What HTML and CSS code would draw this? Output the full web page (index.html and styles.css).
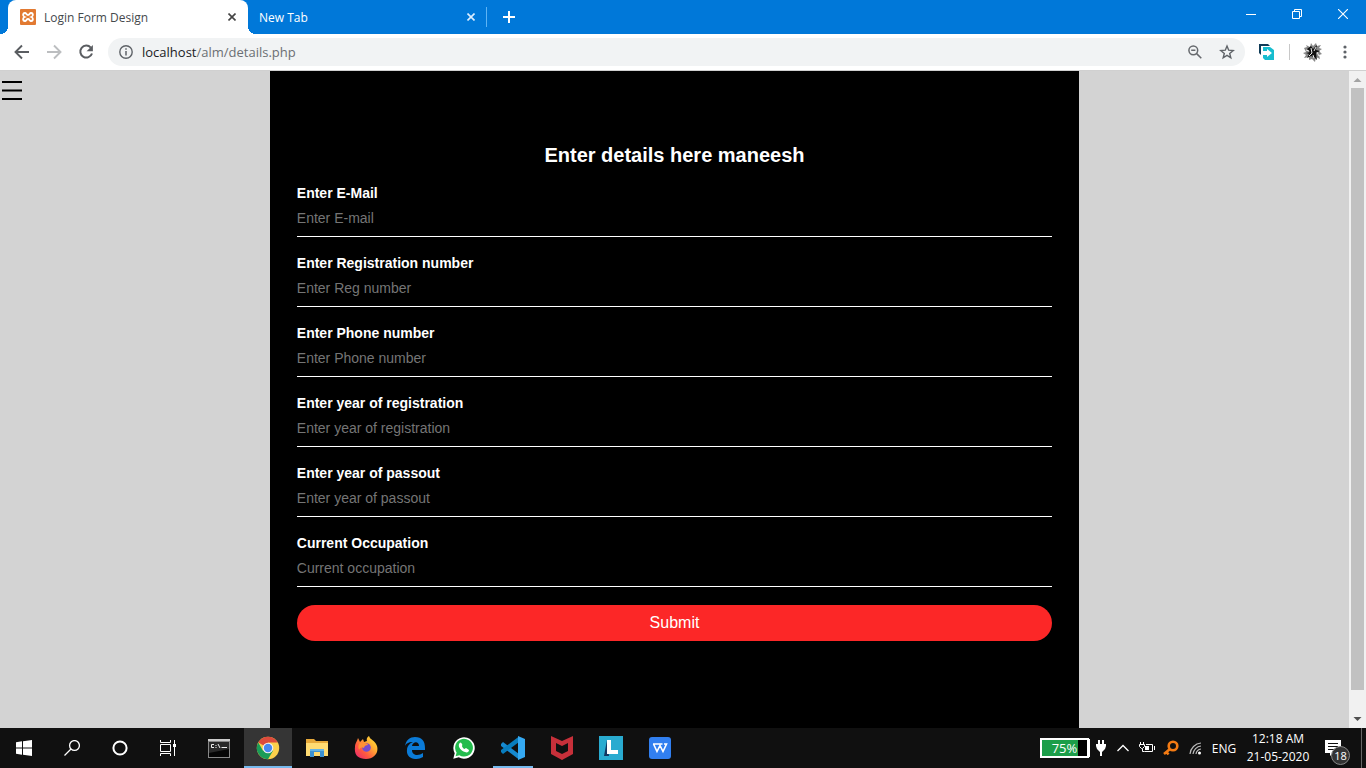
FILE: index.html
```html
<!DOCTYPE html>
<html lang="en">
<head>
<meta charset="utf-8">
<title>Login Form Design</title>
<link rel="stylesheet" href="styles.css">
</head>
<body>
<header class="browser">
  <div class="tabstrip">
    <div class="tab tab-active">
      <svg class="favicon" width="16" height="16" viewBox="0 0 16 16"><rect width="16" height="16" rx="1" fill="#e27a32"/><path d="M5.300 4C2.800 3.600 2.300 7 4.600 8c-2.300 1-1.800 4.400.7 4 1.200-.2 1.200-2 2.700-2s1.500 1.800 2.700 2c2.500.4 3-3 .7-4 2.300-1 1.800-4.400-.7-4C9.500 4.200 9.500 6 8 6S6.500 4.200 5.300 4z" fill="none" stroke="#fff" stroke-width="1.900"/></svg>
      <span class="tab-title">Login Form Design</span>
      <button class="tab-close" aria-label="Close tab"><svg width="8" height="8" viewBox="0 0 8 8"><path d="M.5.5l7 7M7.500.5l-7 7" stroke="#444" stroke-width="1.600"/></svg></button>
    </div>
    <div class="tab tab-idle">
      <span class="tab-title">New Tab</span>
      <button class="tab-close" aria-label="Close tab"><svg width="8" height="8" viewBox="0 0 8 8"><path d="M.5.5l7 7M7.500.5l-7 7" stroke="#dceeff" stroke-width="1.600"/></svg></button>
    </div>
    <button class="new-tab" aria-label="New tab"><svg width="12" height="12" viewBox="0 0 12 12"><path d="M6 0v12M0 6h12" stroke="#fff" stroke-width="2"/></svg></button>
    <div class="window-controls">
      <button aria-label="Minimize"><svg width="10" height="10" viewBox="0 0 10 10"><path d="M0 5.500h10" stroke="#fff"/></svg></button>
      <button aria-label="Restore"><svg width="10" height="10" viewBox="0 0 10 10" fill="none" stroke="#fff"><path d="M.5 2.500h7v7h-7zM2.500 2.500v-2h7v7h-2"/></svg></button>
      <button aria-label="Close"><svg width="10" height="10" viewBox="0 0 10 10"><path d="M0 0l10 10M10 0L0 10" stroke="#fff" stroke-width="1.100"/></svg></button>
    </div>
  </div>
  <div class="toolbar">
    <button class="nav" aria-label="Back"><svg width="16" height="16" viewBox="0 0 16 16" fill="none" stroke="#5a5d61" stroke-width="1.900"><path d="M15 8H2M8 1.500L1.500 8 8 14.500"/></svg></button>
    <button class="nav" aria-label="Forward"><svg width="16" height="16" viewBox="0 0 16 16" fill="none" stroke="#bcbec0" stroke-width="1.900"><path d="M1 8h13M8 1.500L14.500 8 8 14.500"/></svg></button>
    <button class="nav" aria-label="Reload"><svg width="16" height="16" viewBox="0 0 16 16"><path d="M12.800 3.600A6 6 0 1 0 14 9.500" fill="none" stroke="#5a5d61" stroke-width="2"/><path d="M14.900 1v6.300H8.600z" fill="#5a5d61"/></svg></button>
    <div class="omnibox">
      <svg width="14" height="14" viewBox="0 0 14 14"><circle cx="7" cy="7" r="6.200" fill="none" stroke="#5f6368" stroke-width="1.400"/><path d="M7 6v4.500M7 3.300v1.500" stroke="#5f6368" stroke-width="1.500"/></svg>
      <span class="url">localhost<span class="url-path">/alm/details.php</span></span>
      <button class="omni-button" aria-label="Zoom"><svg width="14" height="14" viewBox="0 0 14 14" fill="none" stroke="#66696d" stroke-width="1.500"><circle cx="5.300" cy="5.300" r="4.400"/><path d="M8.600 8.600l4.700 4.700M3.200 5.300h4.200"/></svg></button>
      <button class="omni-button" aria-label="Bookmark"><svg width="16" height="16" viewBox="0 0 16 16"><path d="M8 2l1.700 4.200 4.500.3-3.500 2.900 1.100 4.400L8 11.400l-3.800 2.400 1.100-4.400-3.500-2.900 4.500-.3z" fill="none" stroke="#5f6368" stroke-width="1.400"/></svg></button>
    </div>
    <button class="extension" aria-label="Extension"><svg width="16" height="16" viewBox="0 0 16 16"><path d="M0 0h9l2 2H2v9L0 9z" fill="#103c58"/><path d="M4 3h7l4 3v10H6l-2-2v-3h4v2l5-4-5-4v2H4z" fill="#17bdcf"/></svg></button>
    <span class="divider"></span>
    <button class="avatar" aria-label="Profile"><svg width="20" height="20" viewBox="0 0 20 20"><path d="M1 6l3-1-1-2 4 2 1-4 2 3 3-3 1 3 4-1-2 3 3 1-3 2 3 3-3 1 1 4-4-2-1 5-3-3-3 1v-3l-5 1 2-3-3-2 3-1z" fill="#888"/><path d="M4 7l4-3 2 3 4-4-1 5 4 1-4 2 1 7-3-3-3-1-4 2 2-4-3-1 4-1z" fill="#111"/><path d="M8 6l1 5-3 3M13 5l-2 4M14 10l2 4M3 8l3 1M10 13l1 3" stroke="#eee" fill="none"/></svg></button>
    <button class="menu" aria-label="Menu"><svg width="4" height="14" viewBox="0 0 4 14" fill="#5f6368"><circle cx="2" cy="2" r="1.600"/><circle cx="2" cy="7" r="1.600"/><circle cx="2" cy="12" r="1.600"/></svg></button>
  </div>
</header>
<div class="viewport">
  <main class="page">
    <div class="side"><button class="hamburger" aria-label="Open navigation"><svg width="20" height="20" viewBox="0 0 20 20"><path d="M0 1h20M0 9.500h20M0 18h20" stroke="#000" stroke-width="2"/></svg></button></div>
    <form class="panel">
      <h1>Enter details here maneesh</h1>
      <div class="field"><label for="email">Enter E-Mail</label><input id="email" type="email" placeholder="Enter E-mail"></div>
      <div class="field"><label for="reg">Enter Registration number</label><input id="reg" type="text" placeholder="Enter Reg number"></div>
      <div class="field"><label for="phone">Enter Phone number</label><input id="phone" type="tel" placeholder="Enter Phone number"></div>
      <div class="field"><label for="joined">Enter year of registration</label><input id="joined" type="text" placeholder="Enter year of registration"></div>
      <div class="field"><label for="passout">Enter year of passout</label><input id="passout" type="text" placeholder="Enter year of passout"></div>
      <div class="field"><label for="job">Current Occupation</label><input id="job" type="text" placeholder="Current occupation"></div>
      <button class="submit" type="submit">Submit</button>
    </form>
  </main>
  <div class="scrollbar">
    <svg width="17" height="17" viewBox="0 0 17 17"><path d="M4.500 11h8l-4-4z" fill="#a3a3a3"/></svg>
    <div class="thumb"></div>
    <svg width="17" height="17" viewBox="0 0 17 17"><path d="M4.500 6h8l-4 4z" fill="#505050"/></svg>
  </div>
</div>
<footer class="taskbar">
  <nav class="system">
    <button aria-label="Start"><svg width="16" height="16" viewBox="0 0 16 16" fill="#fff"><path d="M0 2.200L6 1.300v6.200H0zM7 1.200L16 0v7.500H7zM0 8.500h6v6.200l-6-.9zM7 8.500h9V16l-9-1.200z"/></svg></button>
    <button aria-label="Search"><svg width="16" height="16" viewBox="0 0 16 16" fill="none" stroke="#fff" stroke-width="1.300"><circle cx="10.500" cy="5.500" r="4.900"/><path d="M7 9L.5 15.500"/></svg></button>
    <button aria-label="Cortana"><svg width="16" height="16" viewBox="0 0 16 16"><circle cx="8" cy="8" r="6.600" fill="none" stroke="#fff" stroke-width="2"/></svg></button>
    <button aria-label="Task view"><svg width="16" height="16" viewBox="0 0 16 16" fill="none" stroke="#fff"><path d="M.5 4.500h10v7H.5zM.5 0v2.500h10V0M.5 16v-2.500h10V16M14.500 0v16"/><path d="M13 4h3v3h-3z" fill="#fff" stroke="none"/></svg></button>
  </nav>
  <nav class="apps">
    <button aria-label="Command Prompt"><svg width="22" height="19" viewBox="0 0 22 19"><path d="M0 0h22v19H0z" fill="#888"/><path d="M1 3h20v15H1z" fill="#050505"/><path d="M1 3h20v7L1 14z" fill="#292929"/><path d="M0 0h22v2H0z" fill="#ccc"/><path d="M6 5.500H3.500v3H6M8 6v1M8 8v1M10 5l2 4M13.500 8.500H19" stroke="#eee" fill="none"/></svg></button>
    <button class="active" aria-label="Chrome"><svg width="24" height="24" viewBox="0 0 24 24"><circle cx="12" cy="12" r="11.200" fill="#fbd04b"/><path d="M12 12L2.300 6.400A11.200 11.200 0 0 1 21.700 6.400H12z" fill="#dc4b3c"/><path d="M2.300 6.400A11.200 11.200 0 0 0 12 23.200l5-8.400-5-2.800-5 2.800z" fill="#1a9c58"/><circle cx="12" cy="12" r="5.300" fill="#f3f3f3"/><circle cx="12" cy="12" r="4.200" fill="#4788ef"/></svg></button>
    <button aria-label="File Explorer"><svg width="22" height="20" viewBox="0 0 22 20"><path d="M0 1h8l2 2h12v15H0z" fill="#e7a93a"/><path d="M0 5h22v13H0z" fill="#ffdb72"/><path d="M4 11h14v8h-4v-5H8v5H4z" fill="#3c91d2"/><path d="M4 11h14v2H4z" fill="#65b4e5"/></svg></button>
    <button aria-label="Firefox"><svg width="24" height="24" viewBox="0 0 24 24"><defs><linearGradient id="fire" x1="1" y1="0" x2="0" y2="1"><stop stop-color="#fff03a"/><stop offset=".35" stop-color="#ffad32"/><stop offset=".65" stop-color="#ff593f"/><stop offset="1" stop-color="#e72077"/></linearGradient></defs><path d="M4 2l2 4 3-3 1 3 3-1c-1-3 1-4 2-5 1 4 6 4 8 10 2 7-3 13-11 13S0 19 1 11c0-4 2-5 3-9z" fill="url(#fire)"/><circle cx="12.500" cy="11.500" r="4.300" fill="#754cce"/><path d="M6 7c5-1 8 1 8 2-2 0-4 1-4 3-3-1-4 0-5 2-1-3-1-5 1-7z" fill="#ff9135"/></svg></button>
    <button aria-label="Edge"><svg width="20" height="22" viewBox="0 0 20 22"><path d="M0 9C1 3 5 0 10 0c7 0 10 4 10 11v2H7c0 6 7 6 11 3v4C9 25 1 20 2 13c0-4 3-7 6-8-5 0-7 2-8 4zm7 0h7c0-5-6-5-7 0z" fill="#0b7bd7"/></svg></button>
    <button aria-label="WhatsApp"><svg width="22" height="22" viewBox="0 0 22 22"><path d="M.3 21.700l1.400-5.500A10.700 10.700 0 1 1 5.800 20.300z" fill="#fff"/><path d="M2.600 19.300l1-3.700A8.900 8.900 0 1 1 6.400 18.300z" fill="#23bc4d"/><path d="M6 7c1-2 2-2 3 0 1 2-1 1 1 4 2 2 2 0 3 0l3 2c0 2-2 3-4 2-4-1-7-5-6-8z" fill="#fff"/></svg></button>
    <button class="running" aria-label="Visual Studio Code"><svg width="24" height="24" viewBox="0 0 24 24"><path d="M0 8l2-2 16 12v5.500L0 10z" fill="#1689cf"/><path d="M0 16l2 2L18 6V.5L0 14z" fill="#087dbe"/><path d="M17 0l7 3v18l-7 3z" fill="#35a9f2"/></svg></button>
    <button aria-label="McAfee"><svg width="22" height="24" viewBox="0 0 22 24"><path d="M0 0l11 5L22 0v18l-11 6-11-6z" fill="#c7303a"/><path d="M5 7l6 3 6-3v8l-6 3-6-3z" fill="#101010"/></svg></button>
    <button aria-label="Lens app"><svg width="24" height="24" viewBox="0 0 24 24"><path d="M0 0h24v24H0z" fill="#29abd0"/><path d="M8 4L5 20h5z" fill="#123662"/><path d="M8 4h4v10h7v4H8z" fill="#fff"/></svg></button>
    <button aria-label="WPS Office"><svg width="22" height="22" viewBox="0 0 22 22"><rect width="22" height="22" rx="3" fill="#317ff0"/><path d="M4 7h9.500M4.500 7L8 14.500 11 8.500l3 6L17.500 7H15" fill="none" stroke="#fff" stroke-width="1.600"/></svg></button>
  </nav>
  <div class="tray">
    <div class="battery"><span>75%</span></div>
    <button class="tray-icon plug" aria-label="Power"><svg width="10" height="16" viewBox="0 0 10 16"><path d="M2 0h2v4h2V0h2v4h2v2L9 9l-3 3v4H4v-4L1 9 0 6V4h2z" fill="#fff"/></svg></button>
    <button class="tray-icon" aria-label="Show hidden icons"><svg width="12" height="8" viewBox="0 0 12 8"><path d="M.5 7L6 1.500 11.500 7" fill="none" stroke="#fff" stroke-width="1.300"/></svg></button>
    <button class="tray-icon" aria-label="Battery"><svg width="16" height="14" viewBox="0 0 16 14"><path d="M7 3.500h6.500v7h-8M15.500 5v4M1.500 1v2M4.500 1v2M.5 3.500h5v2l-2 2h-1l-2-2zM3.500 8v2.500h2" fill="none" stroke="#fff"/><path d="M6 5h4v4H6z" fill="#fff"/></svg></button>
    <button class="tray-icon" aria-label="Key"><svg width="16" height="16" viewBox="0 0 16 16" fill="none" stroke="#f47b13" stroke-width="2.600"><circle cx="10" cy="6" r="4.300"/><path d="M7 9l-6 5M3.500 12l2 2.500"/></svg></button>
    <button class="tray-icon" aria-label="Wireless network"><svg width="14" height="14" viewBox="0 0 14 14" fill="none" stroke="#bbb" stroke-width="1.200"><path d="M2 13A12 12 0 0 1 13 2M5 13A9 9 0 0 1 13 5M8 13a6 6 0 0 1 5-5"/><circle cx="11.500" cy="12" r="1.500" fill="#fff" stroke="none"/></svg></button>
    <button class="language">ENG</button>
    <button class="clock"><span>12:18 AM</span><span>21-05-2020</span></button>
    <button class="notifications" aria-label="18 notifications"><svg width="16" height="16" viewBox="0 0 16 16"><path d="M0 0h16v13H8l-3 3v-3H0z" fill="#fff"/><path d="M3 3.500h10M3 6.500h10M3 9.500h6" stroke="#101010"/></svg><span class="badge">18</span></button>
    <button class="desktop" aria-label="Show desktop"></button>
  </div>
</footer>
</body>
</html>
```
FILE: styles.css
```css
* { box-sizing: border-box; }
body {
  margin: 0;
  height: 100vh;
  display: flex;
  flex-direction: column;
  overflow: hidden;
  font-family: "Liberation Sans", Arial, sans-serif;
}
button { border: 0; padding: 0; background: none; color: inherit; font: inherit; display: flex; align-items: center; justify-content: center; }
svg { display: block; flex: none; }

.browser { font-family: "Open Sans", "Noto Sans", sans-serif; font-size: 12px; background: #fff; border-bottom: 1px solid #d0d0d0; }
.tabstrip { display: flex; align-items: center; height: 34px; background: #0078d9; }
.tab { display: flex; align-items: center; height: 34px; }
.tab-active {
  width: 256px;
  padding: 0 20px;
  color: #45494d;
  background:
    radial-gradient(circle at 0 0, transparent 8px, #fff 8px) left bottom / 8px 8px no-repeat,
    radial-gradient(circle at 100% 0, transparent 8px, #fff 8px) right bottom / 8px 8px no-repeat;
  isolation: isolate;
  position: relative;
}
.tab-active::before { content: ""; position: absolute; inset: 0 8px; z-index: -1; background: #fff; border-radius: 8px 8px 0 0; }
.tab-active .tab-title { margin-left: 8px; }
.tab-active .tab-close { width: 8px; }
.tab-idle { width: 231px; height: 20px; padding: 0 8px 0 3px; color: #fff; border-right: 1px solid #5eb4f5; }
.tab-title { flex: 1; white-space: nowrap; }
.tab-close { width: 14px; height: 16px; }
.new-tab { width: 28px; height: 28px; margin-left: 8px; }
.window-controls { display: flex; align-self: flex-start; margin-left: auto; }
.window-controls button { width: 46px; height: 28px; }
.toolbar { display: flex; align-items: center; height: 36px; padding: 0 12px 0 6px; }
.nav { width: 32px; height: 28px; }
.omnibox { flex: 1; display: flex; align-items: center; height: 28px; margin-left: 6px; padding: 0 2px 0 11px; border-radius: 14px; background: #f1f3f4; }
.url { flex: 1; margin-left: 9px; font-size: 13px; color: #202124; }
.url-path { color: #6b6f73; }
.omni-button { width: 32px; height: 28px; }
.extension { width: 44px; height: 28px; }
.divider { width: 1px; height: 16px; background: #c8c8c8; }
.avatar { width: 46px; height: 28px; }
.menu { width: 18px; height: 28px; }

.viewport { flex: 1; min-height: 0; display: flex; }
.page { flex: 1; display: grid; grid-template-columns: 20% 1fr 20%; background: #d3d3d3; }
.side { padding: 10px 2px; }
.panel { padding: 72px 27px 0; background: #000; color: #fff; }
h1 { margin: 0 0 18px; font-size: 20px; line-height: 24px; text-align: center; }
.field { display: flex; flex-direction: column; margin-bottom: 18px; }
.field label { font-size: 14px; font-weight: bold; line-height: 16px; }
.field input { height: 36px; padding: 0 0 2px; border: 0; border-bottom: 1px solid #fff; background: none; color: #fff; font: 14px "Liberation Sans", Arial, sans-serif; outline: 0; }
.field input::placeholder { color: #757575; opacity: 1; }
.submit { width: 100%; height: 36px; border-radius: 18px; background: #fc2727; font-size: 16px; }
.scrollbar { width: 17px; display: flex; flex-direction: column; background: #f1f1f1; }
.thumb { flex: 1; margin: 0 2px 21px; background: #c1c1c1; }

.taskbar { display: flex; height: 40px; background: #101010; color: #fff; font: 12px "Open Sans", "Noto Sans", sans-serif; }
.system, .apps { display: flex; }
.apps { gap: 1px; margin-left: 3px; }
.system button, .apps button { width: 48px; height: 40px; }
.apps .active { background: #353535; box-shadow: inset 0 -2px #76b9ed; }
.apps .running { background: linear-gradient(#76b9ed, #76b9ed) center bottom / 40px 2px no-repeat; }
.tray { display: flex; align-items: center; margin-left: auto; }
.battery {
  width: 49px; height: 20px; margin-right: 2px;
  display: flex; align-items: center; justify-content: center;
  border: 2px solid #fff;
  background: linear-gradient(#1c9e49, #1c9e49) left / 36px 100% no-repeat, #000;
  box-shadow: 2px 0 0 -1px #fff;
  font-size: 13px;
}
.tray-icon { width: 24px; height: 40px; }
.plug { width: 20px; }
.language { width: 34px; height: 40px; }
.clock { width: 74px; height: 40px; flex-direction: column; line-height: 18px; }
.notifications { width: 46px; height: 40px; padding-left: 10px; justify-content: flex-start; position: relative; }
.badge { position: absolute; left: 16px; top: 18px; width: 19px; height: 19px; border: 1px solid #888; border-radius: 50%; background: #333; font-size: 11px; line-height: 17px; text-align: center; }
.desktop { width: 5px; height: 40px; border-left: 1px solid #666; }
```
